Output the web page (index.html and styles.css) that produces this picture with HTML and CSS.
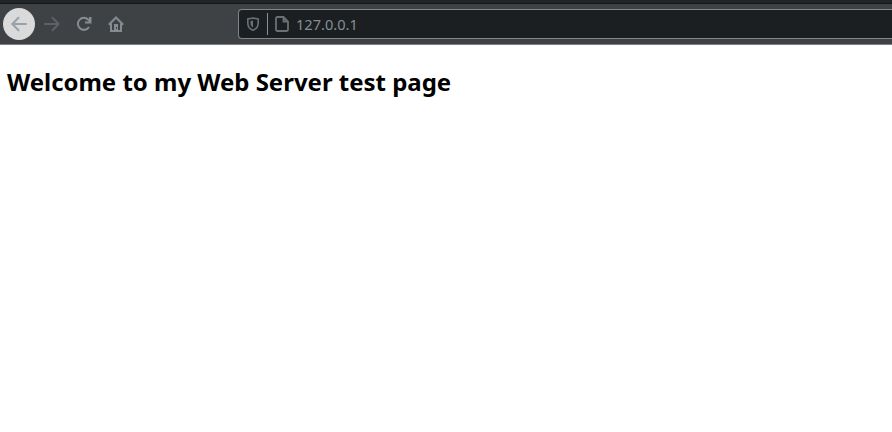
FILE: index.html
```html
<!DOCTYPE html>
<html lang="en">
<head>
<meta charset="utf-8">
<title>Web Server</title>
<link rel="stylesheet" href="styles.css">
</head>
<body>
<header class="toolbar">
  <nav class="nav">
    <span class="btn back"><svg width="16" height="16" viewBox="0 0 16 16"><path d="M15 8H1.500M7.500 1.800L1.300 8l6.200 6.200" stroke-linecap="round" stroke-linejoin="round"/></svg></span>
    <span class="btn forward"><svg width="16" height="16" viewBox="0 0 16 16"><path d="M1 8h13.500M8.500 1.800L14.700 8l-6.200 6.200" stroke-linecap="round" stroke-linejoin="round"/></svg></span>
    <span class="btn reload"><svg width="16" height="16" viewBox="0 0 16 16"><path d="M13 11A6 6 0 1 1 12.300 3.800L14 5.500"/><path class="solid" d="M15.500 1v6.500H9V5.500h4V1z"/></svg></span>
    <span class="btn home"><svg width="16" height="16" viewBox="0 0 16 16"><path d="M.8 8.700L8 1.500l7.200 7.200M3 7.500V15h10V7.500"/><path class="solid" d="M6 8h4v7H6z"/><path class="door" d="M8.500 11v2"/></svg></span>
  </nav>
  <div class="urlbar">
    <svg class="shield" width="16" height="16" viewBox="0 0 16 16"><path d="M8 2L13.200 3v4c0 4-2 6-5.200 7.300C4.800 13 2.800 11 2.800 7V3z"/><path class="solid" d="M8 4.500v7C6 10.300 5.500 9 5.500 7V5z"/></svg>
    <span class="divider"></span>
    <svg class="doc" width="16" height="16" viewBox="0 0 16 16"><path d="M3.500 1h6l4.500 4.500v8a1.500 1.500 0 0 1-1.500 1.500h-9A1.500 1.500 0 0 1 2 13.500v-11A1.500 1.500 0 0 1 3.500 1zM9.500 1v4.500H14"/></svg>
    <span class="url">127.0.0.1</span>
  </div>
</header>
<main><h1>Welcome to my Web Server test page</h1></main>
</body>
</html>
```
FILE: styles.css
```css
body { margin: 0; background: #fff; font-family: "Noto Sans", sans-serif; overflow: hidden; }
.toolbar { box-sizing: border-box; height: 45px; padding-left: 3px; border-top: 3px solid #202427; border-bottom: 1px solid #7a7f86; background: linear-gradient(#141618 1px, #3f4245 1px); padding-top: 1px; display: flex; align-items: center; }
.nav { display: flex; width: 235px; }
.btn { width: 32px; height: 32px; display: flex; align-items: center; justify-content: center; }
svg { fill: none; stroke: #858b93; stroke-width: 2; }
.solid { fill: #858b93; stroke: none; }
.door { stroke: #3f4245; stroke-width: 1; }
.back { border-radius: 50%; background: #dadada; }
.back svg { stroke: #98a1aa; }
.forward svg { stroke: #5d6266; position: relative; left: 1px; }
.reload svg, .home svg { position: relative; left: 1px; }
.urlbar { box-sizing: border-box; flex: 1; height: 30px; padding-left: 6px; display: flex; align-items: center; background: #1b1f21; border: 1px solid #80868d; border-right: 0; border-radius: 4px 0 0 4px; }
.urlbar svg { stroke: #6b7075; }
.urlbar .shield { stroke-width: 1.6; }
.urlbar .solid { fill: #6b7075; stroke: none; }
.divider { width: 1px; height: 22px; background: #8b9199; margin: 0 6px; }
.urlbar .doc { stroke-width: 1.8; }
.url { margin-left: 6px; font-size: 14.6px; color: #878d94; }
main { padding: 0 7px; }
h1 { margin: 20px 0; font-size: 24px; line-height: 34px; letter-spacing: -.02px; color: #000; }
```
